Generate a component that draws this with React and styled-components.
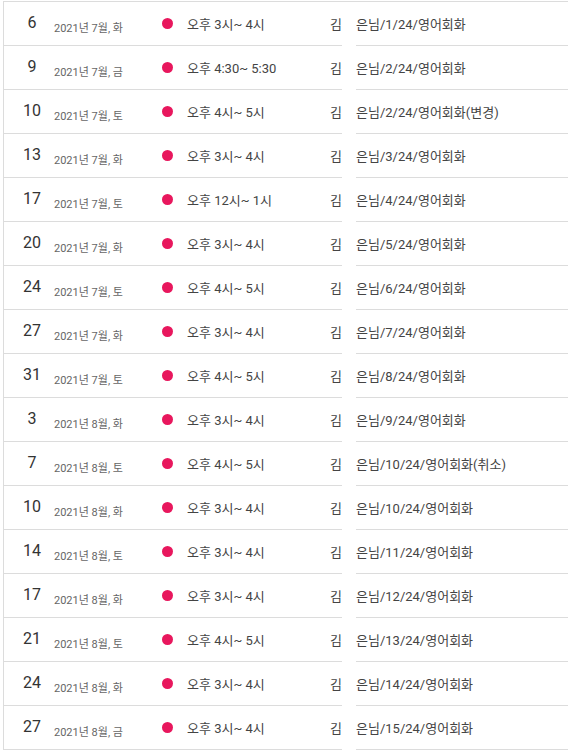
import React from 'react';
import styled, {createGlobalStyle} from 'styled-components';

const GlobalStyle = createGlobalStyle`
  body {
    margin: 0;
    background: #fff;
    font-family: Roboto, "Noto Sans CJK KR", sans-serif;
  }
`;

const List = styled.div`
  margin: 1px 0 0 3px;
  border-top: 1px solid #dcdcdc;
  border-left: 1px solid #dcdcdc;
`;

const Row = styled.div`
  display: grid;
  grid-template-columns: 338px 212px;
  column-gap: 14px;
  height: 44px;
`;

const Main = styled.div`
  display: flex;
  align-items: center;
  border-bottom: 1px solid #dcdcdc;
`;

const Day = styled.div`
  width: 40px;
  margin-left: 8px;
  text-align: center;
  font-size: 16px;
  color: #333;
  margin-top: -2px;
`;

const DateText = styled.div`
  width: 108px;
  padding-left: 2px;
  font-size: 11px;
  color: #666;
  margin-top: 7px;
`;

const Dot = styled.span`
  width: 11px;
  height: 11px;
  border-radius: 50%;
  background: #e8175d;
  flex: none;
  margin-right: 14px;
`;

const Time = styled.div`
  flex: 1;
  font-size: 13px;
  color: #444;
`;

const Owner = styled.div`
  font-size: 13px;
  color: #444;
`;

const Title = styled.div`
  display: flex;
  align-items: center;
  border-bottom: 1px solid #dcdcdc;
  font-size: 13px;
  color: #444;
`;

const rows = [
    [6, 7, '화', '오후 3시~ 4시', '은님/1/24/영어회화'],
    [9, 7, '금', '오후 4:30~ 5:30', '은님/2/24/영어회화'],
    [10, 7, '토', '오후 4시~ 5시', '은님/2/24/영어회화(변경)'],
    [13, 7, '화', '오후 3시~ 4시', '은님/3/24/영어회화'],
    [17, 7, '토', '오후 12시~ 1시', '은님/4/24/영어회화'],
    [20, 7, '화', '오후 3시~ 4시', '은님/5/24/영어회화'],
    [24, 7, '토', '오후 4시~ 5시', '은님/6/24/영어회화'],
    [27, 7, '화', '오후 3시~ 4시', '은님/7/24/영어회화'],
    [31, 7, '토', '오후 4시~ 5시', '은님/8/24/영어회화'],
    [3, 8, '화', '오후 3시~ 4시', '은님/9/24/영어회화'],
    [7, 8, '토', '오후 4시~ 5시', '은님/10/24/영어회화(취소)'],
    [10, 8, '화', '오후 3시~ 4시', '은님/10/24/영어회화'],
    [14, 8, '토', '오후 3시~ 4시', '은님/11/24/영어회화'],
    [17, 8, '화', '오후 3시~ 4시', '은님/12/24/영어회화'],
    [21, 8, '토', '오후 4시~ 5시', '은님/13/24/영어회화'],
    [24, 8, '화', '오후 3시~ 4시', '은님/14/24/영어회화'],
    [27, 8, '금', '오후 3시~ 4시', '은님/15/24/영어회화'],
];

export default function App() {
    return (
        <>
            <GlobalStyle/>
            <List>
                {rows.map(([day, month, weekday, time, title], i) => (
                    <Row key={`row-${i}`}>
                        <Main>
                            <Day>{day}</Day>
                            <DateText>{`2021년 ${month}월, ${weekday}`}</DateText>
                            <Dot/>
                            <Time>{time}</Time>
                            <Owner>김</Owner>
                        </Main>
                        <Title>{title}</Title>
                    </Row>
                ))}
            </List>
        </>
    );
}
